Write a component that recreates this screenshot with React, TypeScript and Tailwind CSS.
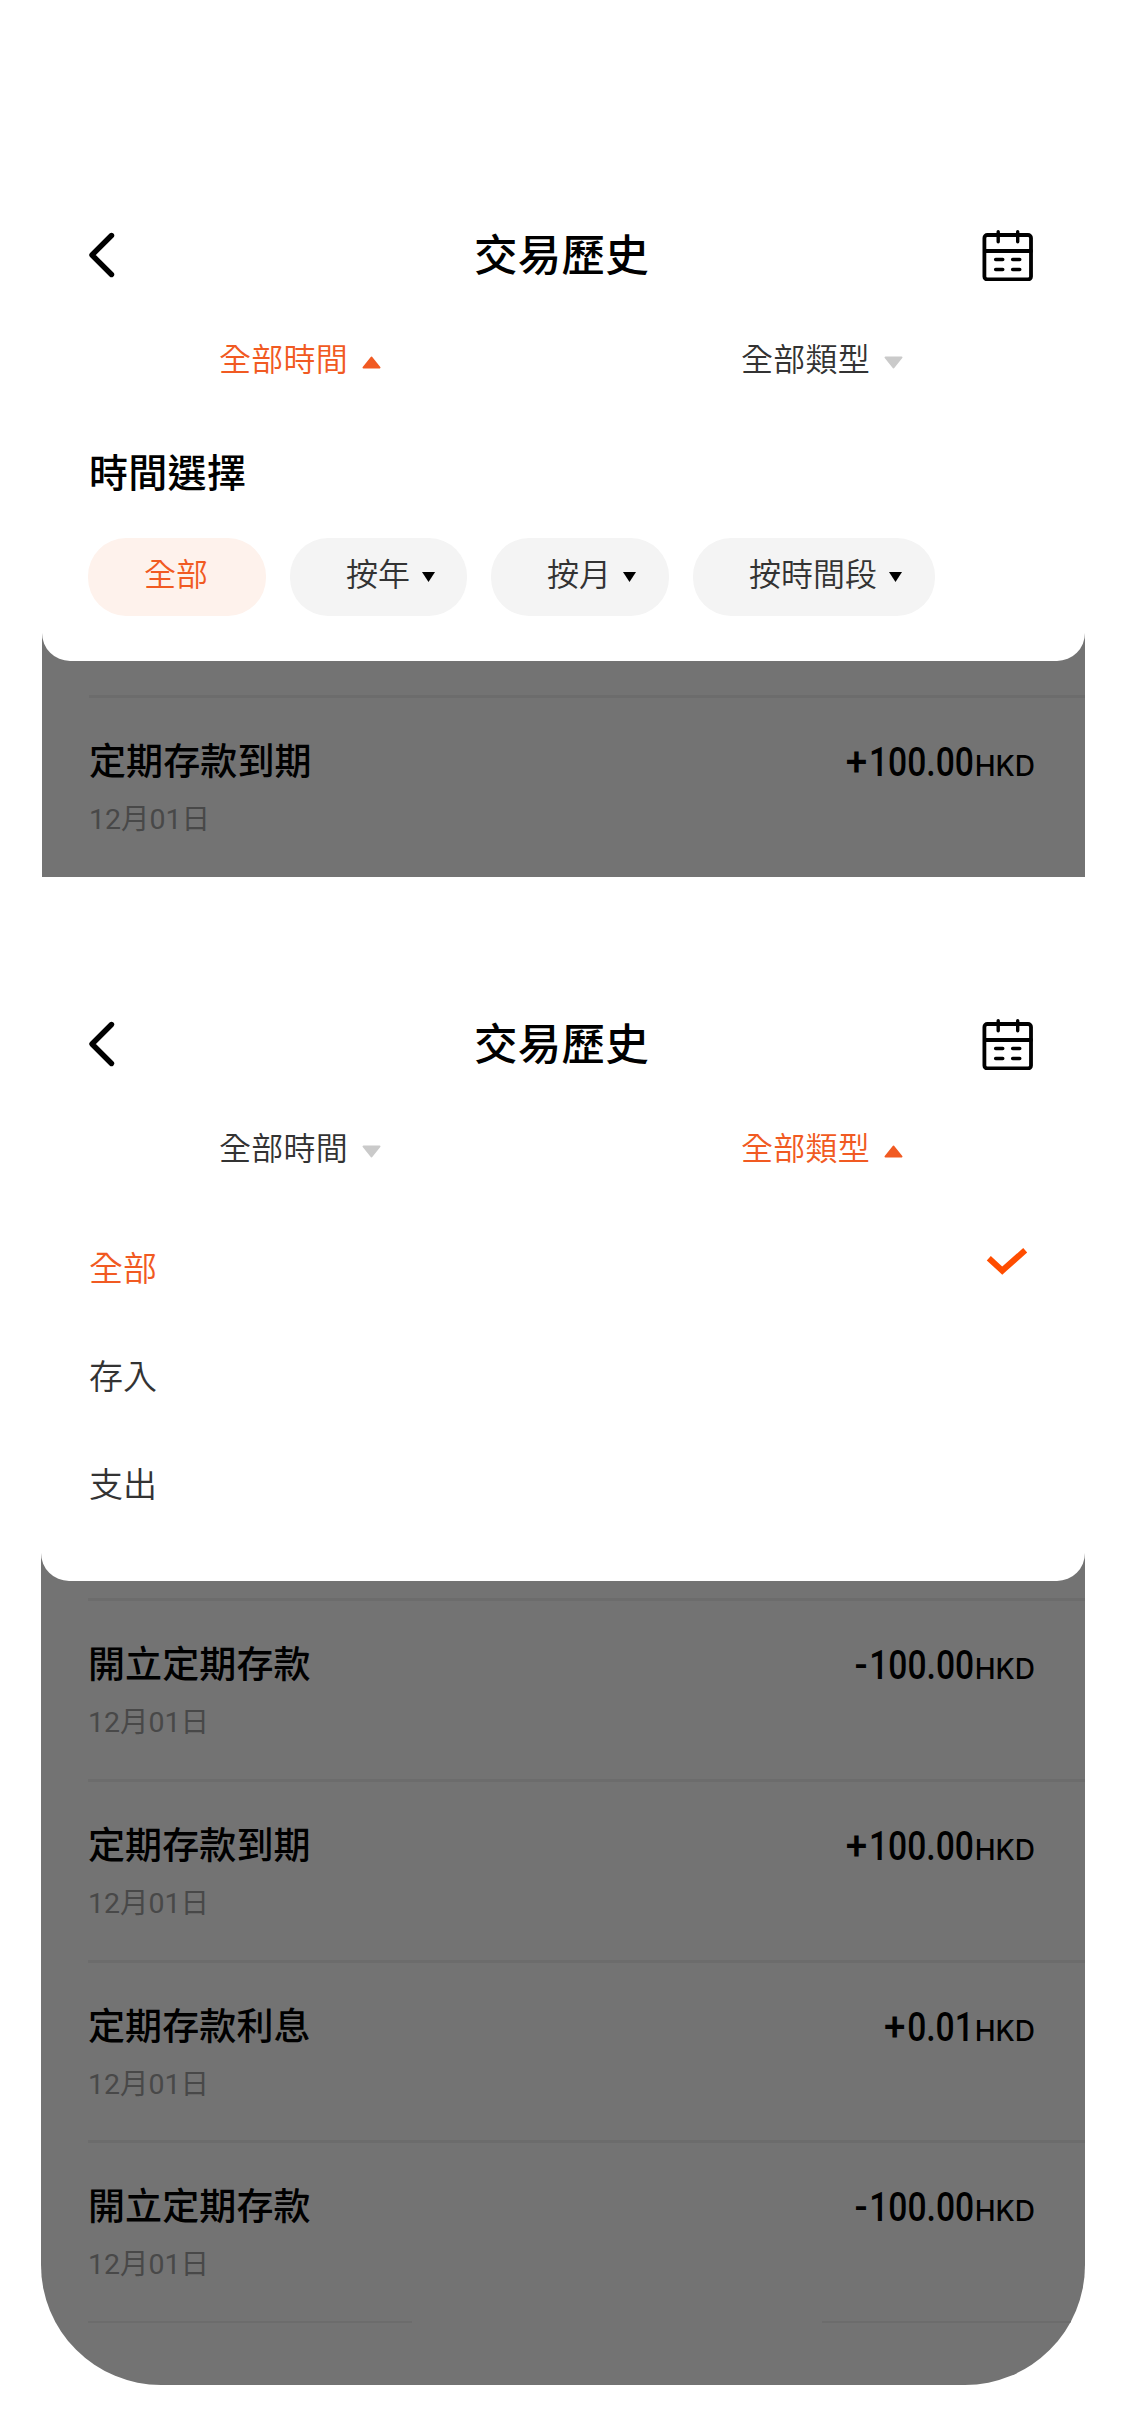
import React from 'react';
import { clsx } from 'clsx';

type FilterTab = 'time' | 'type';

interface Transaction {
  title: string;
  date: string;
  sign: '+' | '-';
  amount: string;
}

const MATURED: Transaction = { title: '定期存款到期', date: '12月01日', sign: '+', amount: '100.00' };
const OPENED: Transaction = { title: '開立定期存款', date: '12月01日', sign: '-', amount: '100.00' };
const INTEREST: Transaction = { title: '定期存款利息', date: '12月01日', sign: '+', amount: '0.01' };

const TIME_OPTIONS = [
  { label: '全部', width: 'w-[178px]', dropdown: false },
  { label: '按年', width: 'w-[177px]', dropdown: true },
  { label: '按月', width: 'w-[178px]', dropdown: true },
  { label: '按時間段', width: 'w-[242px]', dropdown: true },
];

const TYPE_OPTIONS = ['全部', '存入', '支出'];

const BackIcon = () => (
  <svg className="h-[48px] w-[30px]" viewBox="0 0 30 48" fill="none" stroke="#000" strokeWidth="5.400">
    <path d="M25.500 4.500 6 24l19.500 19.500" strokeLinecap="round" strokeLinejoin="round" />
  </svg>
);

const CalendarIcon = () => (
  <svg className="h-[52px] w-[52px]" viewBox="0 0 52 52" fill="none" stroke="#000" strokeLinecap="round">
    <rect x="2.400" y="6" width="46.600" height="44.500" rx="3" strokeWidth="3.800" />
    <path d="M3 22h46" strokeWidth="3.800" />
    <path d="M16.200 2.700v10M35.700 2.700v10" strokeWidth="3.400" />
    <path d="M13.700 30.500h7M30.700 30.500h7M13.700 40.500h7M30.700 40.500h7" strokeWidth="3.600" />
  </svg>
);

const CheckIcon = () => (
  <svg className="h-[30px] w-[42px]" viewBox="0 0 42 30" fill="none" stroke="#ff4d00" strokeWidth="6">
    <path d="M2.800 11.200 16.300 23.600 39.200 3.200" />
  </svg>
);

const TabArrow = ({ open }: { open: boolean }) => (
  <svg className="mt-[7px] h-[13px] w-[19px]" viewBox="0 0 19 13" strokeLinejoin="round" strokeWidth="2">
    {open ? (
      <path d="M9.500 1.500 17.500 11.500H1.500z" fill="#f15a22" stroke="#f15a22" />
    ) : (
      <path d="M1.500 1.500h16L9.500 11.500z" fill="#cacaca" stroke="#cacaca" />
    )}
  </svg>
);

const Header = () => (
  <div className="flex h-[88px] items-center justify-between pr-[51px] pl-[44px]">
    <BackIcon />
    <h1 className="mr-[-25px] pb-[4px] text-[43.5px] leading-[60px] tracking-[0.2px] font-medium text-black">交易歷史</h1>
    <CalendarIcon />
  </div>
);

const FilterTabs = ({ active }: { active: FilterTab }) => {
  const tabs: { id: FilterTab; label: string }[] = [
    { id: 'time', label: '全部時間' },
    { id: 'type', label: '全部類型' },
  ];

  return (
    <div className="grid h-[120px] grid-cols-[516px_528px]">
      {tabs.map((tab) => (
        <button key={tab.id} className="flex items-center justify-center gap-[14px]">
          <span
            className={clsx(
              'pb-[4px] text-[32px] leading-[44px] tracking-[0.3px] font-[350]',
              tab.id === active ? 'text-[#f15a22]' : 'text-[#333]'
            )}
          >
            {tab.label}
          </span>
          <TabArrow open={tab.id === active} />
        </button>
      ))}
    </div>
  );
};

const TransactionRow = ({ item }: { item: Transaction }) => (
  <div className="ml-[47px] flex h-[180.8px] items-start justify-between border-t-[3px] border-[#6c6c6c] pr-[50px]">
    <div>
      <p className="mt-[34px] text-[37px] leading-[54px] tracking-[0.1px] font-medium text-black">{item.title}</p>
      <p className="mt-[14px] font-['Roboto','Noto_Sans_CJK_TC',sans-serif] text-[28.5px] leading-[40px] text-[#484848]">
        {item.date}
      </p>
    </div>
    {/* Importe condensado, alineado a la derecha con la divisa */}
    <div className="mt-[37px] flex items-baseline justify-end leading-[54px] text-black">
      <span className="flex origin-right scale-x-[0.83] font-['Roboto',sans-serif] text-[40.5px] font-medium">
        <span className="mr-[2px] origin-right scale-x-[1.15]">{item.sign}</span>
        {item.amount}
      </span>
      <span className="ml-[1px] font-['Inter',sans-serif] text-[28px] font-medium">HKD</span>
    </div>
  </div>
);

const TimePanel = () => (
  <div className="h-[242px] px-[46px]">
    <h2 className="pt-[23px] pl-[1px] text-[39px] leading-[56px] tracking-[0.3px] font-medium text-black">時間選擇</h2>
    <div className="mt-[40px] flex gap-[24px]">
      {TIME_OPTIONS.map((option) => (
        <button
          key={option.label}
          className={clsx(
            'flex h-[78px] items-center rounded-[38px] pb-[10px] pl-[56px] text-[32px] font-[350]',
            option.width,
            option.dropdown ? 'bg-[#f4f4f4] text-[#333]' : 'bg-[#fef2ec] text-[#f15a22]'
          )}
        >
          {option.label}
          {option.dropdown && (
            <svg className="mt-[9px] ml-[12px] h-[10px] w-[13px]" viewBox="0 0 13 10">
              <path d="M0 0h13L6.500 10z" fill="#000" />
            </svg>
          )}
        </button>
      ))}
    </div>
  </div>
);

const TypePanel = () => (
  <div className="h-[373px] pt-[5px] pr-[57px] pl-[47px]">
    {TYPE_OPTIONS.map((label, idx) => (
      <div key={label} className="flex h-[108px] items-center justify-between">
        <span className={clsx('text-[34px] leading-[48px] font-[350]', idx === 0 ? 'text-[#f15a22]' : 'text-[#333]')}>
          {label}
        </span>
        {idx === 0 && (
          <div className="pb-[10px]">
            <CheckIcon />
          </div>
        )}
      </div>
    ))}
  </div>
);

export default function App() {
  return (
    <main
      lang="zh-Hant"
      className="h-[2436px] w-[1125px] bg-white pt-[211px] pl-[42px] font-['Noto_Sans_CJK_TC',sans-serif]"
    >
      {/* Filtro por tiempo */}
      <section className="h-[666px] w-[1043px] bg-[#737373]">
        <div className="rounded-b-[28px] bg-white">
          <Header />
          <FilterTabs active="time" />
          <TimePanel />
        </div>
        <div className="pt-[34px]">
          <TransactionRow item={MATURED} />
        </div>
      </section>

      {/* Filtro por tipo */}
      <section className="mt-[123px] ml-[-1px] h-[1385px] w-[1044px] overflow-hidden rounded-b-[120px] bg-[#737373]">
        <div className="rounded-b-[28px] bg-white pl-[1px]">
          <Header />
          <FilterTabs active="type" />
          <TypePanel />
        </div>
        <div className="pt-[17px]">
          <TransactionRow item={OPENED} />
          <TransactionRow item={MATURED} />
          <TransactionRow item={INTEREST} />
          <TransactionRow item={OPENED} />
          <div className="ml-[47px] flex justify-between">
            <div className="h-[2px] w-[324px] bg-[#6c6c6c]" />
            <div className="h-[2px] w-[263px] bg-[#6c6c6c]" />
          </div>
        </div>
      </section>
    </main>
  );
}
